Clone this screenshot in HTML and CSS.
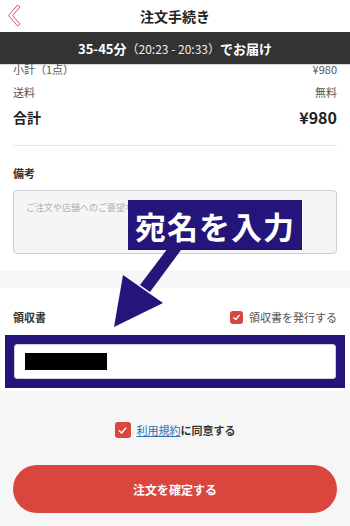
FILE: index.html
```html
<!DOCTYPE html>
<html lang="ja">
<head>
<meta charset="utf-8">
<title>注文手続き</title>
<link rel="stylesheet" href="styles.css">
</head>
<body>
<div class="app">
  <header class="topbar">
    <svg class="back" width="24" height="30" viewBox="0 0 24 30">
      <polygon points="16.5,5 19,7 11.5,15.5 19,24 16.5,26 7.5,15.5" fill="#fff" stroke="#d9534f" stroke-width="1" stroke-linejoin="round"/>
    </svg>
    <h1 class="title">注文手続き</h1>
  </header>

  <div class="delivery"><b>35-45分</b><span class="time">（20:23 - 20:33）</span><b>でお届け</b></div>

  <main class="content">
    <section class="panel summary">
      <div class="row sub"><span>小計（1点）</span><span>¥980</span></div>
      <div class="row sub"><span>送料</span><span>無料</span></div>
      <div class="row total"><span>合計</span><span>¥980</span></div>
    </section>
    <section class="panel notes">
      <div class="divider"></div>
      <div class="label">備考</div>
      <div class="textarea">ご注文や店舗へのご要望などがございましたらご記入ください。</div>
    </section>

    <section class="panel receipt">
      <div class="receipt-head">
        <div class="label">領収書</div>
        <div class="check-line">
          <span class="cb small"><svg width="9" height="9" viewBox="0 0 10 10"><path d="M2 5.2 L4.2 7.2 L8 2.8" fill="none" stroke="#fff" stroke-width="1.4" stroke-linecap="round" stroke-linejoin="round"/></svg></span>
          <span>領収書を発行する</span>
        </div>
      </div>
      <div class="name-frame">
        <div class="name-input"><span class="redact"></span></div>
      </div>
    </section>

    <section class="footer">
      <div class="agree">
        <span class="cb big"><svg width="11" height="11" viewBox="0 0 10 10"><path d="M2 5.2 L4.2 7.2 L8 2.8" fill="none" stroke="#fff" stroke-width="1.3" stroke-linecap="round" stroke-linejoin="round"/></svg></span>
        <span><a class="terms">利用規約</a><b>に同意する</b></span>
      </div>
      <button class="submit">注文を確定する</button>
    </section>
  </main>

  <div class="callout">宛名を入力</div>
  <svg class="arrow" width="350" height="526" viewBox="0 0 350 526">
    <polygon points="181,250 171,244 140,285 150,292" fill="#24157a"/>
    <polygon points="123,275 163,303 114,327" fill="#24157a"/>
  </svg>
</div>
</body>
</html>
```
FILE: styles.css
```css
* { box-sizing: border-box; margin: 0; padding: 0; }
html, body { width: 350px; height: 526px; overflow: hidden; }
body {
  font-family: "Noto Sans CJK JP", "Noto Sans", sans-serif;
  background: #f6f6f6;
  color: #222;
}
.app { position: relative; width: 350px; height: 526px; overflow: hidden; }

.topbar {
  height: 32px;
  background: #fff;
  display: flex;
  align-items: center;
  justify-content: center;
  position: relative;
  z-index: 3;
}
.back { position: absolute; left: 1px; top: 0; }
.title { font-size: 14px; font-weight: 700; color: #222; line-height: 1; }

.delivery {
  position: absolute;
  top: 32px; left: 0; right: 0;
  height: 32px;
  background: #333;
  color: #fff;
  display: flex;
  align-items: center;
  justify-content: center;
  font-size: 13px;
  z-index: 2;
  box-shadow: 0 1px 1px rgba(0,0,0,0.15);
}
.delivery b { font-weight: 700; }
.delivery .time { font-weight: 400; font-size: 12px; color: #eee; }

.content { display: flex; flex-direction: column; }
.panel { background: #fff; padding: 0 13px; }

.summary { padding-top: 25px; }
.row { display: flex; justify-content: space-between; align-items: center; }
.row.sub { height: 23px; font-size: 11px; color: #555; }
.row.total { height: 28px; font-size: 14px; font-weight: 700; color: #222; }
.row.total span:last-child { font-size: 16px; }

.notes { padding-top: 14px; padding-bottom: 17px; }
.divider { height: 1px; background: #e6e6e6; }
.label { font-size: 11px; font-weight: 700; color: #333; height: 18px; line-height: 18px; }
.notes .label { margin-top: 18px; }
.textarea {
  margin-top: 8px;
  height: 64px;
  border: 1px solid #cfcfcf;
  border-radius: 4px;
  background: #f5f5f5;
  font-size: 9px;
  color: #b0b0b0;
  padding: 10px 12px;
  white-space: nowrap;
  overflow: hidden;
}

.receipt { margin-top: 17px; padding-top: 20px; padding-bottom: 3px; }
.receipt-head { display: flex; justify-content: space-between; align-items: center; height: 18px; }
.check-line { display: flex; align-items: center; gap: 6px; font-size: 11px; color: #555; }
.cb {
  display: inline-flex; align-items: center; justify-content: center;
  background: #d9463e; border-radius: 3px;
}
.cb.small { width: 13px; height: 13px; }
.cb.big { width: 16px; height: 16px; }
.name-frame {
  margin: 9px -8px 0 -8px;
  background: #24157a;
  padding: 9px;
}
.name-input {
  height: 35px;
  background: #fff;
  border: 1px solid #d0d0d0;
  border-radius: 3px;
  display: flex; align-items: center;
  padding-left: 10px;
}
.redact { display: block; width: 82px; height: 17px; background: #000; }

.footer { padding: 31px 13px 0; display: flex; flex-direction: column; align-items: center; }
.agree { display: flex; align-items: center; gap: 6px; height: 16px; font-size: 11px; }
.terms { color: #2f6db3; text-decoration: underline; }
.agree b { color: #333; font-weight: 700; }
.submit {
  margin-top: 27px;
  width: 324px; height: 48px;
  border: none; border-radius: 24px;
  background: #d9463e;
  color: #fff;
  font-family: inherit;
  font-size: 12px; font-weight: 700;
}

.callout {
  position: absolute;
  left: 128px; top: 200px;
  width: 174px; height: 50px;
  background: #24157a;
  color: #fff;
  font-size: 31px;
  font-weight: 700;
  letter-spacing: 1px;
  display: flex; align-items: center; justify-content: center;
  z-index: 4;
}
.arrow { position: absolute; left: 0; top: 0; z-index: 4; pointer-events: none; }
```
